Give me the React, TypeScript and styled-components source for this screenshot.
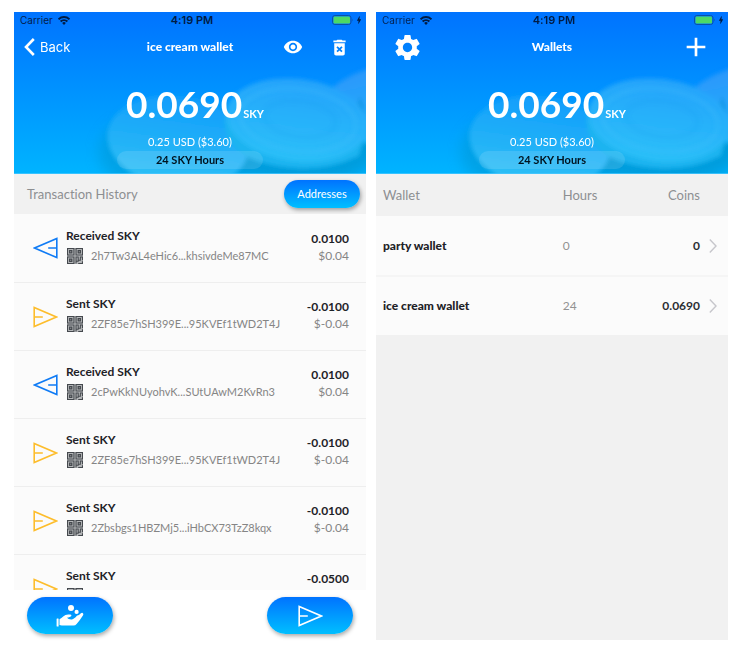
import React from 'react';
import styled, { createGlobalStyle } from 'styled-components';
import { MdDeleteForever, MdSettings, MdVisibility, MdAdd, MdBolt } from 'react-icons/md';

const GlobalStyle = createGlobalStyle`
  *, *::before, *::after { box-sizing: border-box; }
  body {
    margin: 0;
    background: #fff;
    color: #1e2227;
    font-family: Lato, "Open Sans", sans-serif;
    font-size: 12px;
    line-height: 16px;
    font-variant-ligatures: none;
  }
  button { font: inherit; color: inherit; border: 0; padding: 0; background: none; cursor: pointer; }
  svg { display: block; flex: none; }
`;

const Page = styled.main`
  display: grid;
  grid-template-columns: repeat(2, minmax(0, 1fr));
  gap: 10px;
  min-height: 100vh;
  padding: 12px 10px 11px 14px;
`;

const Screen = styled.section<{ $tone: string }>`
  display: flex;
  flex-direction: column;
  min-width: 0;
  background: ${(p) => p.$tone};
`;

const Hero = styled.header`
  position: relative;
  display: flex;
  flex-direction: column;
  height: 162px;
  flex: none;
  overflow: hidden;
  color: #fff;
  background: linear-gradient(#0073ff, #00b4ff);
`;

const CoinArt = styled.svg`
  position: absolute;
  inset: 0;
  width: 100%;
  height: 100%;
`;

const StatusBar = styled.div`
  position: relative;
  display: grid;
  grid-template-columns: 1fr auto 1fr;
  align-items: center;
  height: 16px;
  padding: 0 2px 0 6px;
  color: #03204d;
  font-family: Inter, sans-serif;
  font-size: 10px;
`;

const Carrier = styled.span`
  display: flex;
  align-items: center;
  gap: 5px;
`;

const Clock = styled.span`
  font-size: 11px;
  font-weight: 600;
  color: #001c44;
`;

const Power = styled.span`
  display: flex;
  align-items: center;
  justify-content: flex-end;
`;

const NavBar = styled.nav`
  position: relative;
  display: grid;
  grid-template-columns: 1fr auto 1fr;
  align-items: center;
  height: 38px;
  padding: 0 16px 0 10px;
`;

const NavTitle = styled.h1`
  margin: 0;
  padding-left: 6px;
  font-size: 12px;
  line-height: 16px;
  font-weight: 900;
`;

const BackButton = styled.button`
  display: flex;
  align-items: center;
  justify-self: start;
  gap: 5px;
  font-family: Inter, sans-serif;
  font-size: 13px;
`;

const NavActions = styled.div`
  display: flex;
  align-items: center;
  justify-content: flex-end;
  gap: 26px;
`;

const IconButton = styled.button`
  display: grid;
  place-items: center;
`;

const SettingsButton = styled(IconButton)`
  justify-self: start;
  margin-left: 6px;
`;

const Summary = styled.div`
  position: relative;
  display: flex;
  flex-direction: column;
  align-items: center;
`;

const Balance = styled.p`
  display: flex;
  align-items: baseline;
  gap: 1px;
  margin: 16px 0 0;
  padding-left: 10px;
  font-size: 37px;
  line-height: 44px;
  font-weight: 700;
`;

const Unit = styled.span`
  font-size: 11px;
  line-height: 16px;
`;

const Fiat = styled.p`
  margin: 8px 0 1px;
  font-size: 11px;
  line-height: 16px;
`;

const Hours = styled.p`
  width: 146px;
  margin: 0;
  border-radius: 9px;
  background: rgba(255, 255, 255, 0.12);
  color: #00131f;
  font-size: 11px;
  line-height: 18px;
  font-weight: 700;
  text-align: center;
`;

const ListBar = styled.div`
  display: flex;
  align-items: center;
  justify-content: space-between;
  height: 40px;
  padding: 0 6px 0 13px;
  background: #f1f1f1;
`;

const ListTitle = styled.h2`
  margin: 0;
  color: #8d8f91;
  font-size: 13px;
  font-weight: 400;
`;

const Pill = styled.button<{ $large?: boolean }>`
  display: grid;
  place-items: center;
  width: ${(p) => (p.$large ? 86 : 76)}px;
  height: ${(p) => (p.$large ? 37 : 28)}px;
  border-radius: 20px;
  background: linear-gradient(#0073ff, #00bfff);
  box-shadow: 1px 2px 4px rgba(0, 0, 0, 0.35);
  color: #fff;
  font-size: 11px;
`;

const Transactions = styled.ul`
  flex: 1 1 0;
  min-height: 376px;
  height: 0;
  margin: 0;
  padding: 0;
  overflow: hidden;
  background: #fbfbfb;
  list-style: none;
`;

const Transaction = styled.li`
  display: grid;
  grid-template-columns: 26px minmax(0, 1fr) auto;
  column-gap: 7px;
  align-items: center;
  height: 68px;
  padding: 0 17px 0 19px;
  border-bottom: 1px solid #eee;

  &:first-child { height: 69px; }
`;

const Detail = styled.div`
  min-width: 0;
  padding-bottom: 5px;
`;

const Kind = styled.h3`
  margin: 0 0 4px;
  font-size: 12px;
  line-height: 16px;
  font-weight: 700;
`;

const Address = styled.p`
  display: flex;
  align-items: center;
  gap: 8px;
  margin: 0;
  padding-left: 1px;
  color: #858585;
  font-size: 11px;
  white-space: nowrap;
`;

const Amounts = styled.div`
  padding-bottom: 3px;
  font-size: 12px;
  text-align: right;
`;

const Amount = styled.p<{ $muted?: boolean }>`
  margin: 0;
  color: ${(p) => (p.$muted ? '#858585' : '#1e2227')};
  font-weight: ${(p) => (p.$muted ? 400 : 700)};
  line-height: 17px;
`;

const Footer = styled.footer`
  display: flex;
  align-items: flex-start;
  justify-content: space-between;
  height: 50px;
  padding: 7px 13px 0;
`;

const WalletTable = styled.table`
  width: 100%;
  table-layout: fixed;
  border-collapse: collapse;
  text-align: left;
`;

const Head = styled.th<{ $width?: string; $end?: boolean }>`
  width: ${(p) => p.$width ?? 'auto'};
  height: 42px;
  padding: 0 0 0 7px;
  color: #8d8f91;
  font-size: 13px;
  font-weight: 400;
  text-align: ${(p) => (p.$end ? 'right' : 'left')};
`;

const WalletRow = styled.tr`
  height: 60px;
  background: #fbfbfb;
  & + & { height: 59px; border-top: 2px solid #f5f5f5; }
`;

const WalletName = styled.th`
  padding: 0 0 0 7px;
  font-size: 12px;
  font-weight: 900;
`;

const Cell = styled.td<{ $end?: boolean }>`
  padding: 0 0 0 7px;
  color: ${(p) => (p.$end ? '#2b2e33' : '#929292')};
  font-size: 12px;
  font-weight: ${(p) => (p.$end ? 700 : 400)};
  text-align: ${(p) => (p.$end ? 'right' : 'left')};
`;

const ChevronCell = styled.td`
  padding: 0 0 0 9px;
  vertical-align: middle;
`;

function Coins({ id }: { id: string }) {
  return (
    <CoinArt viewBox="0 0 352 162" preserveAspectRatio="none" aria-hidden="true">
      <defs>
        <filter id={`${id}-soft`}><feGaussianBlur stdDeviation="2" /></filter>
        <filter id={`${id}-shade`} x="-30%" y="-30%" width="160%" height="160%"><feGaussianBlur stdDeviation="7" /></filter>
        <linearGradient id={`${id}-far`} x1="0" y1="0" x2="0" y2="1">
          <stop offset="0" stopColor="#2b97fb" />
          <stop offset="1" stopColor="#20b6fa" />
        </linearGradient>
        <linearGradient id={`${id}-face`} gradientUnits="userSpaceOnUse" x1="0" y1="66" x2="0" y2="160">
          <stop offset="0" stopColor="#25a3fb" />
          <stop offset="1" stopColor="#2cc4f8" />
        </linearGradient>
        <linearGradient id={`${id}-left`} gradientUnits="userSpaceOnUse" x1="0" y1="80" x2="0" y2="166">
          <stop offset="0" stopColor="#0f9bfc" />
          <stop offset="1" stopColor="#2dbef5" />
        </linearGradient>
      </defs>
      <ellipse cx="165" cy="140" rx="80" ry="46" fill="#0099d6" opacity="0.6" filter={`url(#${id}-shade)`} />
      <ellipse cx="288" cy="128" rx="82" ry="46" fill="#0098d4" opacity="0.8" filter={`url(#${id}-shade)`} />
      <g filter={`url(#${id}-soft)`}>
        <ellipse cx="375" cy="90" rx="74" ry="38" fill={`url(#${id}-far)`} transform="rotate(-14 375 90)" />
        <path d="M346 84q6 14 8 40l-12-22z" fill="#078fdc" opacity="0.7" />
        <ellipse cx="164" cy="130" rx="71" ry="46" fill={`url(#${id}-left)`} transform="rotate(8 164 130)" />
        <path d="M211 104q-2 34 34 46q55 16 100-6l8-30-40-38z" fill="#1fb4f0" />
        <ellipse cx="283" cy="108" rx="71" ry="41" fill={`url(#${id}-face)`} transform="rotate(7 283 108)" />
      </g>
      <g filter={`url(#${id}-soft)`} fill="none" strokeWidth="3">
        <ellipse cx="284" cy="108" rx="58" ry="31" stroke="#48c0ff" opacity="0.3" transform="rotate(7 284 108)" />
        <ellipse cx="286" cy="107" rx="36" ry="18" stroke="#168ee5" opacity="0.12" transform="rotate(7 286 107)" />
      </g>
      <path d="M0 161.5H352" stroke="#4dc9ff" opacity="0.7" />
    </CoinArt>
  );
}

function Wifi() {
  return (
    <svg width="12" height="9" viewBox="0 0 12 9" fill="none" stroke="#001c44" strokeWidth="1.9" aria-hidden="true">
      <path d="M.5 3.3a7.8 7.8 0 0 1 11 0M2.6 5.5a4.8 4.8 0 0 1 6.8 0" />
      <path d="M6 8.9 4.1 7a2.7 2.7 0 0 1 3.8 0z" fill="#001c44" stroke="none" />
    </svg>
  );
}

function Battery() {
  return (
    <svg width="22" height="10" viewBox="0 0 22 10" aria-hidden="true">
      <rect x=".5" y=".5" width="18.5" height="9" rx="2.4" fill="none" stroke="#0a50a8" />
      <rect x="1.5" y="1.5" width="16.5" height="7" rx="1.3" fill="#4cd964" />
      <path d="M20.3 3.5q1.4 1.5 0 3z" fill="#0a50a8" />
    </svg>
  );
}

function Chevron({ back }: { back?: boolean }) {
  return back ? (
    <svg width="11" height="18" viewBox="0 0 11 18" fill="none" stroke="#fff" strokeWidth="2.6" aria-hidden="true">
      <path d="M9.8 1 2 9l7.8 8" />
    </svg>
  ) : (
    <svg width="8" height="14" viewBox="0 0 8 14" fill="none" stroke="#c7c7cc" strokeWidth="1.4" aria-hidden="true">
      <path d="m.8.6 6.2 6.4-6.2 6.4" />
    </svg>
  );
}

function Plane({ color, incoming }: { color: string; incoming?: boolean }) {
  const tip = incoming ? 'M23.8 1.4v19.2L1.6 11zM23.8 11h-8.6' : 'M1.2 1.4v19.2L23.4 11zM1.2 11h8.6';
  return (
    <svg width="25" height="22" viewBox="0 0 25 22" fill="none" stroke={color} strokeWidth="1.6" aria-hidden="true">
      <path d={tip} />
    </svg>
  );
}

function QrCode() {
  return (
    <svg width="16" height="16" viewBox="0 0 15 15" fill="none" stroke="#45494e" aria-hidden="true">
      <path d="M0 0h15v15H0z" fill="#b4b6b8" stroke="none" />
      <path d="M.5.5h6v6h-6zM8.5.5h6v6h-6zM.5 8.5h6v6h-6z" />
      <path d="M2.5 2.5h2v2h-2zM10.5 2.5h2v2h-2zM2.5 10.5h2v2h-2z" strokeWidth="1.2" />
      <path d="M8.5 14.5v-6h2v3h2v-3h2v3M8 12.5h3M10.5 14.5h4v-2" />
    </svg>
  );
}

function HandWithCoins() {
  return (
    <svg width="28" height="22" viewBox="0 0 28 22" fill="#fff" aria-hidden="true">
      <circle cx="15" cy="3.1" r="3" />
      <circle cx="20.6" cy="6.9" r="2.1" />
      <rect x=".6" y="13.4" width="2" height="8.2" rx=".5" />
      <path d="M3.5 14.2q2-1.3 3.7-2.8 2-1.8 5-1.8h2.1q1.6.2 1 1.5-.5 1-3 1.3l-1.4.4q1.7 1.9 5 1.6l1.2-.3 5.6-3.8 2.2-2q1.4-1 2.2.1.6 1-.2 2.1-2.9 4.7-6.3 8.5-1.2 1.5-3.1 1.5H8.3q-2.6 0-4.8-.6z" />
      <path d="m19.4 13.2 1.2-2.2q1-1 1.9-.8.8.4.5 1.2l-.7 1z" />
    </svg>
  );
}

function PhoneStatus() {
  return (
    <StatusBar>
      <Carrier>Carrier <Wifi /></Carrier>
      <Clock>4:19 PM</Clock>
      <Power><Battery /><MdBolt size={10} color="#001c44" /></Power>
    </StatusBar>
  );
}

function BalanceSummary() {
  return (
    <Summary>
      <Balance>0.0690<Unit>SKY</Unit></Balance>
      <Fiat>0.25 USD ($3.60)</Fiat>
      <Hours>24 SKY Hours</Hours>
    </Summary>
  );
}

const transactions = [
  { incoming: true, address: '2h7Tw3AL4eHic6...khsivdeMe87MC', amount: '0.0100', usd: '$0.04' },
  { incoming: false, address: '2ZF85e7hSH399E...95KVEf1tWD2T4J', amount: '-0.0100', usd: '$-0.04' },
  { incoming: true, address: '2cPwKkNUyohvK...SUtUAwM2KvRn3', amount: '0.0100', usd: '$0.04' },
  { incoming: false, address: '2ZF85e7hSH399E...95KVEf1tWD2T4J', amount: '-0.0100', usd: '$-0.04' },
  { incoming: false, address: '2Zbsbgs1HBZMj5...iHbCX73TzZ8kqx', amount: '-0.0100', usd: '$-0.04' },
  { incoming: false, address: '', amount: '-0.0500', usd: '' },
];

const wallets = [
  { name: 'party wallet', hours: '0', coins: '0' },
  { name: 'ice cream wallet', hours: '24', coins: '0.0690' },
];

export default function App() {
  return (
    <>
      <GlobalStyle />
      <Page>
        <Screen $tone="#fff">
          <Hero>
            <Coins id="detail" />
            <PhoneStatus />
            <NavBar>
              <BackButton><Chevron back />Back</BackButton>
              <NavTitle>ice cream wallet</NavTitle>
              <NavActions>
                <IconButton aria-label="Show wallet"><MdVisibility size={20} /></IconButton>
                <IconButton aria-label="Delete wallet"><MdDeleteForever size={21} /></IconButton>
              </NavActions>
            </NavBar>
            <BalanceSummary />
          </Hero>
          <ListBar>
            <ListTitle>Transaction History</ListTitle>
            <Pill>Addresses</Pill>
          </ListBar>
          <Transactions>
            {transactions.map((t, i) => (
              <Transaction key={i}>
                <Plane incoming={t.incoming} color={t.incoming ? '#0f7bf5' : '#fdbd2c'} />
                <Detail>
                  <Kind>{t.incoming ? 'Received SKY' : 'Sent SKY'}</Kind>
                  <Address><QrCode />{t.address}</Address>
                </Detail>
                <Amounts>
                  <Amount>{t.amount}</Amount>
                  <Amount $muted>{t.usd || '\u00a0'}</Amount>
                </Amounts>
              </Transaction>
            ))}
          </Transactions>
          <Footer>
            <Pill $large aria-label="Receive"><HandWithCoins /></Pill>
            <Pill $large aria-label="Send"><Plane color="#fff" /></Pill>
          </Footer>
        </Screen>

        <Screen $tone="#f1f1f1">
          <Hero>
            <Coins id="wallets" />
            <PhoneStatus />
            <NavBar>
              <SettingsButton aria-label="Settings"><MdSettings size={31} /></SettingsButton>
              <NavTitle>Wallets</NavTitle>
              <NavActions>
                <IconButton aria-label="Add wallet"><MdAdd size={32} /></IconButton>
              </NavActions>
            </NavBar>
            <BalanceSummary />
          </Hero>
          <WalletTable>
            <thead>
              <tr>
                <Head scope="col">Wallet</Head>
                <Head scope="col" $width="21%">Hours</Head>
                <Head scope="col" $width="20%" $end>Coins</Head>
                <Head as="td" $width="28px" />
              </tr>
            </thead>
            <tbody>
              {wallets.map((w) => (
                <WalletRow key={w.name}>
                  <WalletName scope="row">{w.name}</WalletName>
                  <Cell>{w.hours}</Cell>
                  <Cell $end>{w.coins}</Cell>
                  <ChevronCell><IconButton aria-label={`Open ${w.name}`}><Chevron /></IconButton></ChevronCell>
                </WalletRow>
              ))}
            </tbody>
          </WalletTable>
        </Screen>
      </Page>
    </>
  );
}
